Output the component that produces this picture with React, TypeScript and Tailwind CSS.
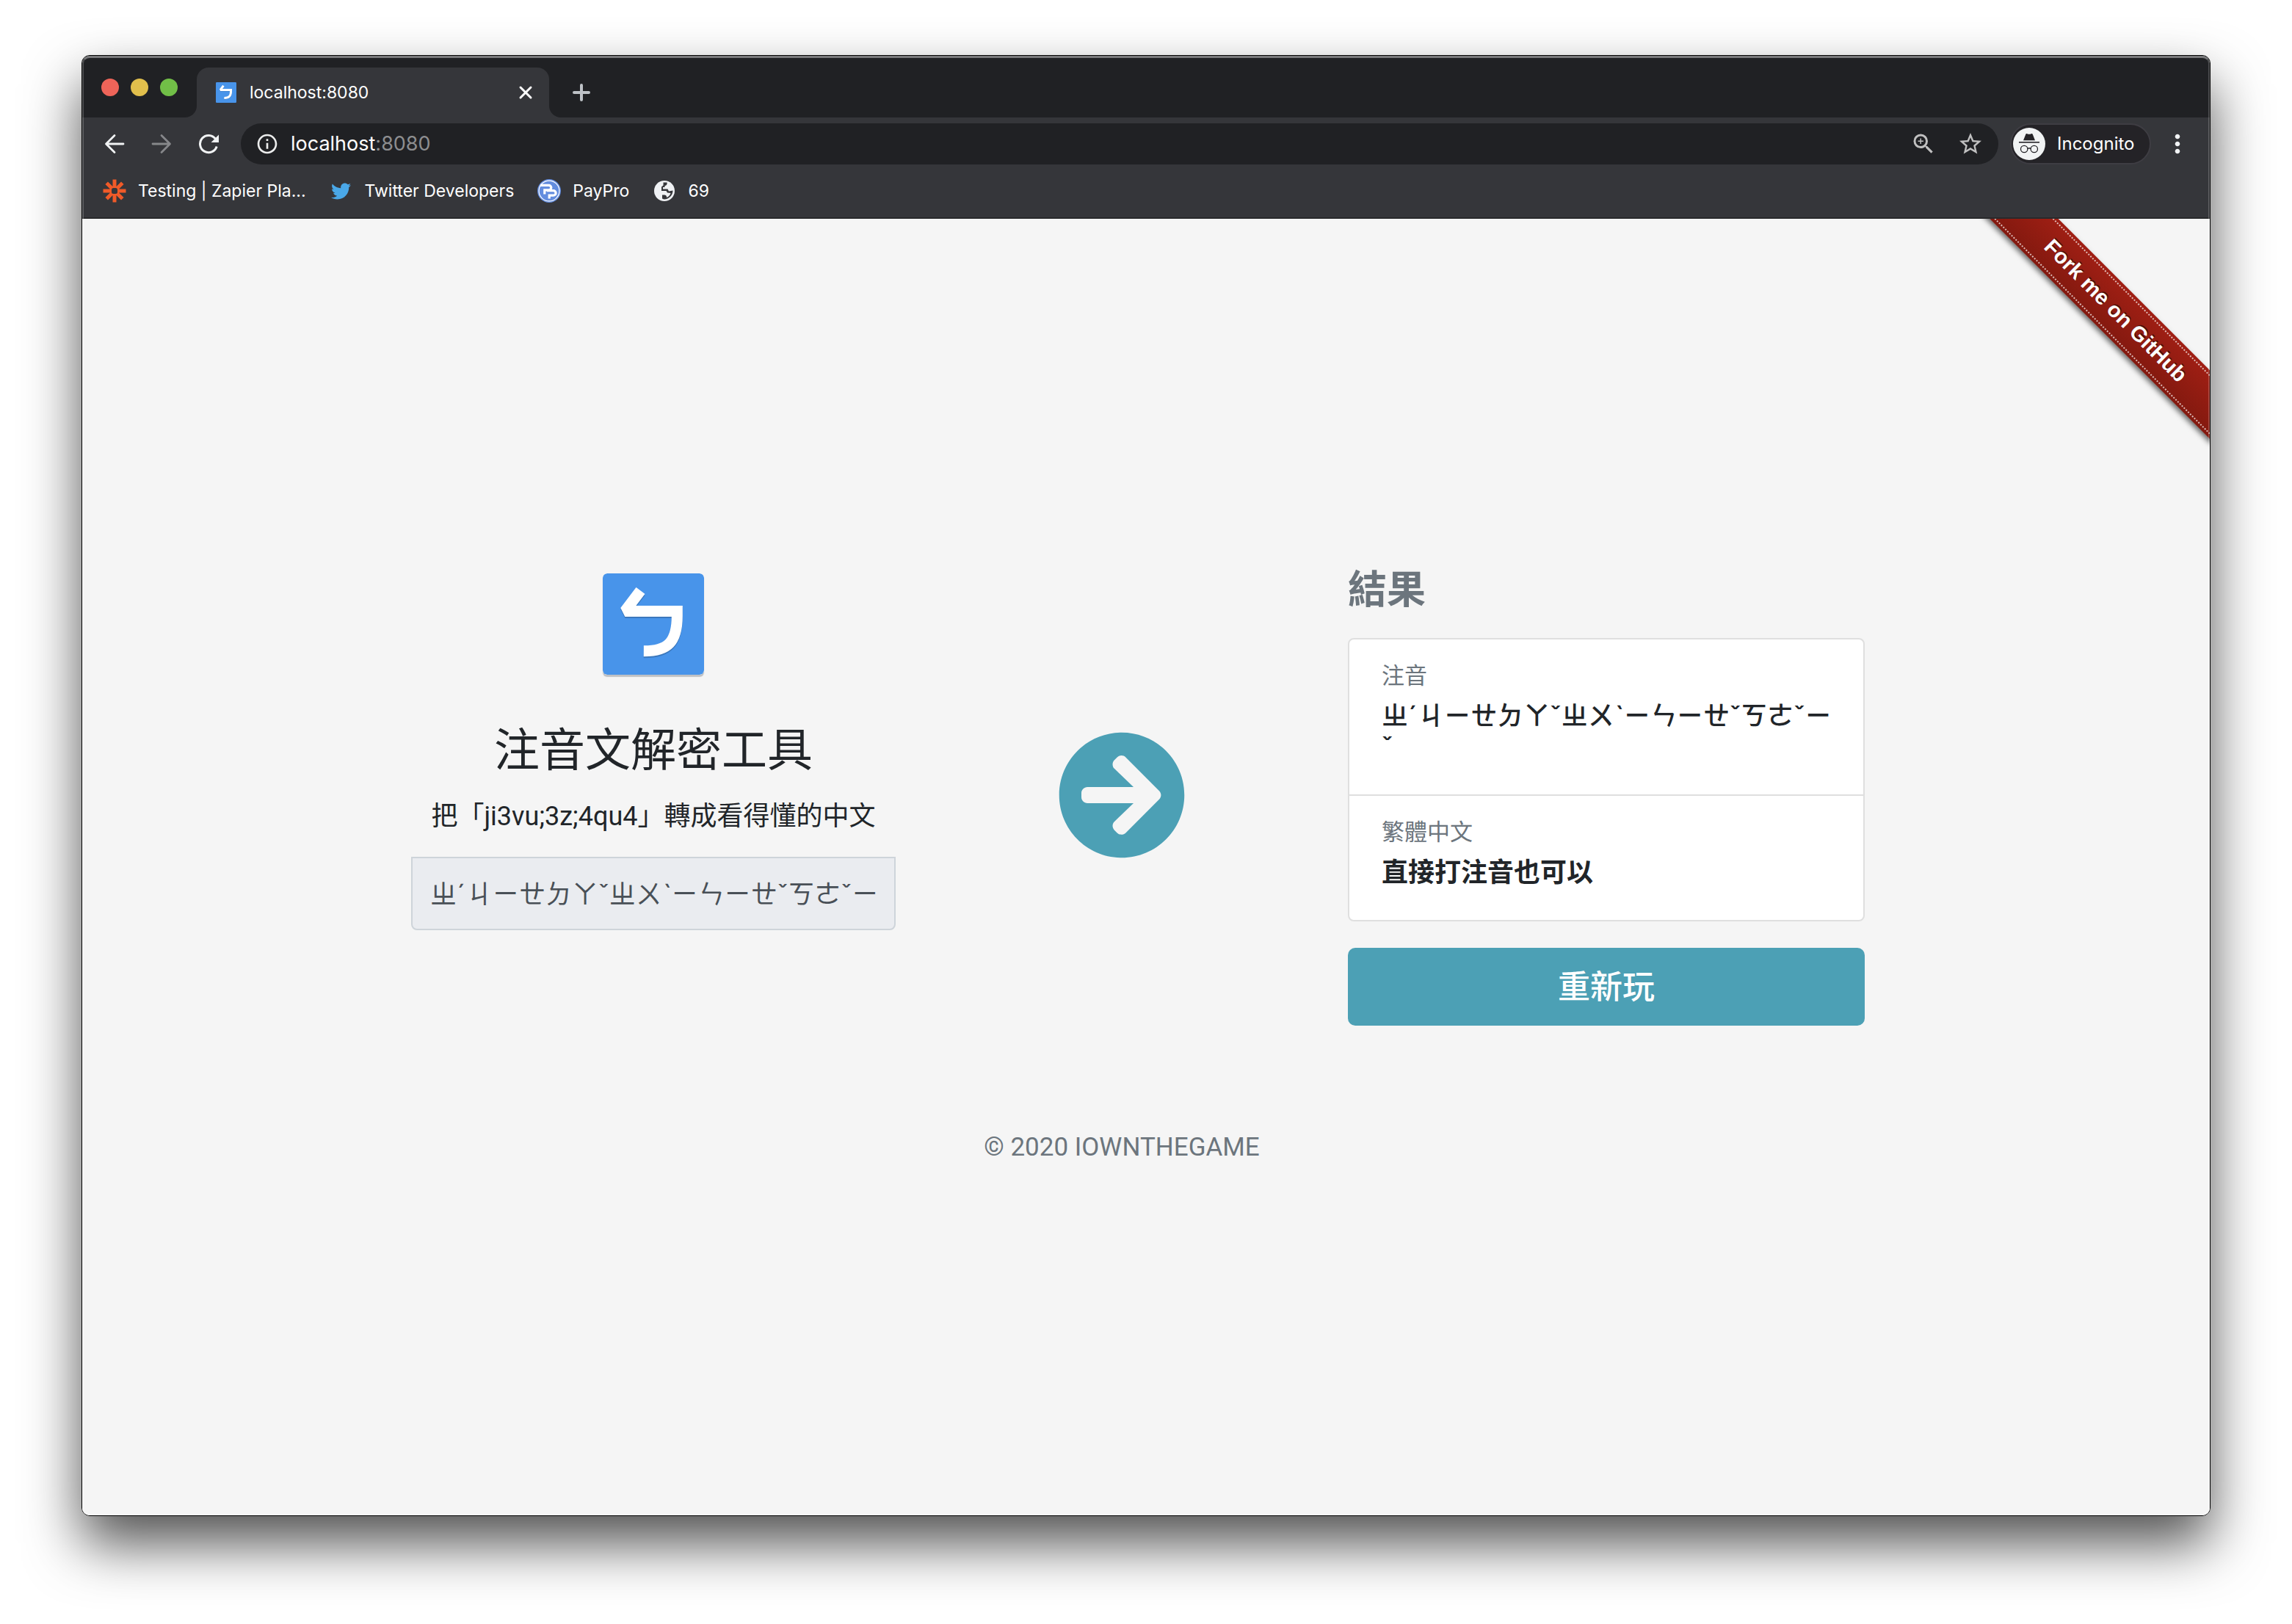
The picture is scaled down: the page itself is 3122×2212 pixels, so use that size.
import type { ReactNode } from 'react';
import { FaArrowCircleRight, FaTwitter } from 'react-icons/fa';
import { MdInfoOutline, MdMoreVert, MdStarOutline, MdZoomIn } from 'react-icons/md';

const ZHUYIN = 'ㄓˊㄐㄧㄝㄉㄚˇㄓㄨˋㄧㄣㄧㄝˇㄎㄜˇㄧˇ';

function Logo({ className }: { className: string }) {
  return (
    <svg viewBox="0 0 138 138" className={className} aria-hidden="true">
      <rect width="138" height="138" rx="6" fill="#4894ea" />
      <g fill="none" strokeWidth="15" stroke="#3b78bd" transform="translate(0 2)">
        <path d="M51.5 23.4 30.3 51.5H101" strokeLinejoin="bevel" />
        <path d="M101.3 44V58C101.3 93 89 106 55.8 105.8" />
      </g>
      <g fill="none" strokeWidth="15" stroke="#fff">
        <path d="M51.5 23.4 30.3 51.5H101" strokeLinejoin="bevel" />
        <path d="M101.3 44V58C101.3 93 89 106 55.8 105.8" />
      </g>
    </svg>
  );
}

function Zapier() {
  return (
    <svg viewBox="-16 -16 32 32" className="size-8" aria-hidden="true">
      <g stroke="#f05a28" strokeWidth="5">
        <path d="M0-15.5V15.5M-15.5 0H15.5M-10.8-10.8 10.8 10.8M10.8-10.8-10.8 10.8" />
      </g>
      <rect x="-4" y="-4" width="8" height="8" rx="2.5" fill="#35363a" />
    </svg>
  );
}

function PayPro() {
  return (
    <svg viewBox="0 0 32 32" className="size-8" aria-hidden="true">
      <circle cx="16" cy="16" r="16" fill="#638ddf" />
      <circle cx="16" cy="16" r="13.9" fill="none" stroke="#fff" strokeWidth="1.2" />
      <g fill="none" stroke="#fff" strokeWidth="3.2">
        <path d="M4 8.3H15.5A3.3 3.3 0 0 1 15.5 14.9H9.8V20.5" />
        <path d="M13 15.6H21.8A3.3 3.3 0 0 1 21.8 22.2H16.2V26.5" />
      </g>
    </svg>
  );
}

function Globe() {
  return (
    <svg viewBox="0 0 28 28" className="size-7" aria-hidden="true">
      <circle cx="14" cy="14" r="14" fill="#eff1f4" />
      <g fill="#35363a">
        <path d="M12.500 2.500H17.500C18 5 17 6.500 14.500 7V9H12V11.500H18.500L20 14.500 25.500 13.500C25.500 19.500 20.500 25.500 13.500 25.500L11 24.500V19.500H14C16 19.500 17.500 21 17 23C20 22 22 19.500 22.500 17L18 16.500 16.500 14H10V8.500L12.500 6.500Z" />
      </g>
    </svg>
  );
}

function Incognito() {
  return (
    <svg viewBox="0 0 44 44" className="size-11" aria-hidden="true">
      <circle cx="22" cy="22" r="22" fill="#f1f3f4" />
      <path d="M17.300 9C17.500 8 18.500 7.800 19.300 8.200C21 9 23 9 24.700 8.200C25.500 7.800 26.500 8 26.800 9L30 17.200H14Z" fill="#242327" />
      <rect x="8" y="19" width="28" height="1.600" fill="#242327" />
      <g fill="none" stroke="#242327" strokeWidth="1.300">
        <circle cx="15.200" cy="29" r="4.700" />
        <circle cx="28.800" cy="29" r="4.700" />
        <path d="M19.900 28.500Q22 27 24.100 28.500" />
      </g>
    </svg>
  );
}

function Stroke({ d, color, className, width }: { d: string; color: string; className: string; width: number }) {
  return (
    <svg viewBox="0 0 28 28" className={className} fill="none" stroke={color} strokeWidth={width} strokeLinecap="round" strokeLinejoin="round" aria-hidden="true">
      <path d={d} />
    </svg>
  );
}

function Bookmark({ icon, label }: { icon: ReactNode; label: string }) {
  return (
    <a href="#" className="flex items-center gap-4">
      <span className="flex size-8 items-center justify-center">{icon}</span>
      <span>{label}</span>
    </a>
  );
}

function TabStrip() {
  return (
    <div className="flex h-[84px] items-end bg-[#202124]">
      <div className="flex h-[82px] w-35 items-center gap-4 pl-[26px]">
        <button aria-label="Close window" className="size-6 rounded-full bg-[#ee6459]" />
        <button aria-label="Minimize window" className="size-6 rounded-full bg-[#e1bf4c]" />
        <button aria-label="Zoom window" className="size-6 rounded-full bg-[#71bf47]" />
      </div>
      <div className="size-4 bg-[#35363a]">
        <div className="size-4 rounded-br-full bg-[#202124]" />
      </div>
      <div className="flex h-17 w-[480px] items-center rounded-t-2xl bg-[#35363a] px-[26px]">
        <Logo className="size-7" />
        <span className="ml-[18px] flex-1 text-[23px] text-white">localhost:8080</span>
        <button aria-label="Close tab" className="-mr-2">
          <Stroke className="size-7" width={3} color="#fff" d="M7 7 21 21M21 7 7 21" />
        </button>
      </div>
      <div className="size-4 bg-[#35363a]">
        <div className="size-4 rounded-bl-full bg-[#202124]" />
      </div>
      <button aria-label="New tab" className="flex h-17 items-center pl-[14px]">
        <Stroke className="size-7" width={4} color="#bdc1c6" d="M14 4V24M4 14H24" />
      </button>
    </div>
  );
}

function Toolbar() {
  return (
    <div className="flex h-18 items-center bg-[#35363a] pr-6 pl-[30px]">
      <div className="flex w-[186px] items-center gap-9">
        <button aria-label="Back">
          <Stroke className="size-7" width={2.8} color="#f1f3f4" d="M26 14H3M14 2.500 2.500 14 14 25.500" />
        </button>
        <button aria-label="Forward">
          <Stroke className="size-7" width={2.8} color="#86878a" d="M2 14H25M14 2.500 25.500 14 14 25.500" />
        </button>
        <button aria-label="Reload">
          <svg viewBox="0 0 28 28" className="size-7" aria-hidden="true">
            <path d="M23.500 7.200A11.600 11.600 0 1 0 25.200 17.500" fill="none" stroke="#f1f3f4" strokeWidth="3" strokeLinecap="butt" />
            <path d="M28 1.500V12H17.500Z" fill="#f1f3f4" />
          </svg>
        </button>
      </div>
      <div className="flex h-14 flex-1 items-center rounded-full bg-[#202124] pr-5 pl-5">
        <MdInfoOutline className="size-8 text-[#eceded]" />
        <span className="ml-4 flex-1 text-[27px] text-white">
          localhost<span className="text-[#8d8e90]">:8080</span>
        </span>
        <button aria-label="Zoom" className="mr-7">
          <MdZoomIn className="size-9 text-[#c0c0c0]" />
        </button>
        <button aria-label="Bookmark this tab">
          <MdStarOutline className="size-9 text-[#c0c0c0]" />
        </button>
      </div>
      <button className="ml-4 flex h-14 w-48 items-center gap-4 rounded-full border-2 border-[#3e3d43] bg-[#242327] pl-[2px] text-2xl text-white">
        <Incognito />
        Incognito
      </button>
      <button aria-label="Menu" className="ml-4">
        <MdMoreVert className="size-10 text-[#f1f3f4]" />
      </button>
    </div>
  );
}

function Bookmarks() {
  return (
    <nav className="flex h-[66px] items-start border-b-2 border-[#28292b] bg-[#35363a] pt-3 pl-7 text-[23px] leading-8 text-white">
      <ul className="flex gap-8">
        <li><Bookmark icon={<Zapier />} label="Testing | Zapier Pla..." /></li>
        <li><Bookmark icon={<FaTwitter className="size-[27px] text-[#4aa8e8]" />} label="Twitter Developers" /></li>
        <li><Bookmark icon={<PayPro />} label="PayPro" /></li>
        <li><Bookmark icon={<Globe />} label="69" /></li>
      </ul>
    </nav>
  );
}

function Ribbon() {
  return (
    <div className="absolute top-0 right-0 size-[346px] overflow-hidden">
      <a
        href="#"
        className="absolute top-[92px] -right-[92px] w-[440px] rotate-45 bg-linear-to-t from-[#83190f] to-[#a01f14] py-1 text-center font-[Liberation_Sans] text-[29px] leading-[54px] font-bold text-white shadow-[0_4px_7px_rgba(0,0,0,0.55)] [text-shadow:0_-2px_rgba(0,0,0,0.5)]"
      >
        <span className="block border-y-2 border-dotted border-white/70">Fork me on GitHub</span>
      </a>
    </div>
  );
}

function Result({ label, children }: { label: string; children: ReactNode }) {
  return (
    <div className="pt-[25px] pr-9 pb-11 pl-11">
      <dt className="text-[31px] leading-12 text-[#6c757d]">{label}</dt>
      <dd className="mt-[10px] text-4xl leading-[42px] font-medium break-all">{children}</dd>
    </div>
  );
}

function Page() {
  return (
    <div className="relative flex flex-1 flex-col justify-center bg-[#f5f5f5] text-[#212529]">
      <Ribbon />
      <main className="mx-auto w-full max-w-[2002px] pr-[22px]">
        <div className="flex items-center justify-between">
          <section className="flex w-[660px] flex-col items-center pb-[118px]">
            <Logo className="size-[138px] rounded-md shadow-[0_3px_1px_#bfc1c4]" />
            <h1 className="mt-[66px] text-[62px] leading-[74px]">注音文解密工具</h1>
            <label htmlFor="zhuyin" className="mt-[26px] font-[Roboto,'Noto_Sans_CJK_TC',sans-serif] text-4xl leading-[54px]">
              把「ji3vu;3z;4qu4」轉成看得懂的中文
            </label>
            <input
              id="zhuyin"
              readOnly
              value={ZHUYIN}
              className="mt-7 h-25 w-full rounded-b-lg border-2 border-[#ced4da] bg-[#eaecf0] px-6 pb-1 text-4xl text-[#495057]"
            />
          </section>
          <FaArrowCircleRight className="size-44 text-[#4ca0b5]" aria-hidden="true" />
          <section className="w-[704px]">
            <h2 className="text-[53px] leading-17 font-bold text-[#6c757d]">結果</h2>
            <dl className="mt-8 divide-y-2 divide-[#dfdfdf] rounded-lg border-2 border-[#dfdfdf] bg-white">
              <Result label="注音">{ZHUYIN}</Result>
              <Result label="繁體中文">
                <strong className="font-semibold">直接打注音也可以</strong>
              </Result>
            </dl>
            <button className="mt-9 h-[106px] w-full rounded-[10px] bg-[#4ca0b5] text-[44px] font-medium text-white">重新玩</button>
          </section>
        </div>
      </main>
      <footer className="mt-[136px] pr-[66px] text-center font-[Roboto,sans-serif] text-[35px] leading-[60px] text-[#6c757d]">© 2020 IOWNTHEGAME</footer>
    </div>
  );
}

export default function App() {
  return (
    <div className="flex min-h-screen bg-white px-[111px] pt-[75px] pb-[147px] font-[Inter,'Noto_Sans_CJK_TC',sans-serif]">
      <div className="relative flex flex-1 flex-col overflow-hidden rounded-[11px] border border-black shadow-[0_38px_76px_rgba(0,0,0,0.68)]">
        <header>
          <TabStrip />
          <Toolbar />
          <Bookmarks />
        </header>
        <Page />
        <div className="pointer-events-none absolute inset-0 rounded-[10px] border-2 border-t-3 border-white/20 border-t-white/40" />
      </div>
    </div>
  );
}
